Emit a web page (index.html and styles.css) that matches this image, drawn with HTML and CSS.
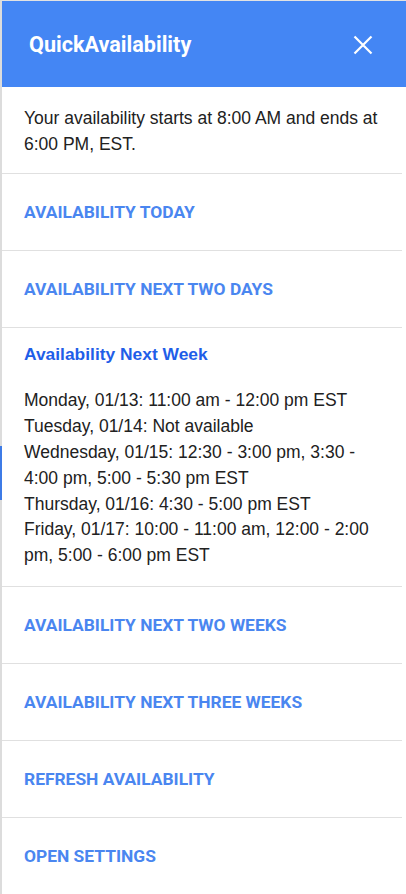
FILE: index.html
```html
<!DOCTYPE html>
<html>
<head>
<meta charset="utf-8">
<link rel="stylesheet" href="styles.css">
</head>
<body>
<div class="panel">
  <header class="header">
    <div class="title">QuickAvailability</div>
    <svg class="close" width="20" height="20" viewBox="0 0 20 20" aria-label="Close">
      <path d="M1.5 1.5 L18.5 18.5 M18.5 1.5 L1.5 18.5" stroke="#fff" stroke-width="2.2" fill="none"/>
    </svg>
  </header>
  <div class="content">
    <div class="intro">Your availability starts at 8:00 AM and ends at 6:00 PM, EST.</div>
    <div class="row"><span class="btn">AVAILABILITY TODAY</span></div>
    <div class="row"><span class="btn">AVAILABILITY NEXT TWO DAYS</span></div>
    <div class="week">
      <div class="week-title">Availability Next Week</div>
      <div class="week-list">
        <div>Monday, 01/13: 11:00 am - 12:00 pm EST</div>
        <div>Tuesday, 01/14: Not available</div>
        <div>Wednesday, 01/15: 12:30 - 3:00 pm, 3:30 - 4:00 pm, 5:00 - 5:30 pm EST</div>
        <div>Thursday, 01/16: 4:30 - 5:00 pm EST</div>
        <div>Friday, 01/17: 10:00 - 11:00 am, 12:00 - 2:00 pm, 5:00 - 6:00 pm EST</div>
      </div>
    </div>
    <div class="row"><span class="btn">AVAILABILITY NEXT TWO WEEKS</span></div>
    <div class="row"><span class="btn">AVAILABILITY NEXT THREE WEEKS</span></div>
    <div class="row"><span class="btn">REFRESH AVAILABILITY</span></div>
    <div class="row"><span class="btn">OPEN SETTINGS</span></div>
  </div>
  <div class="scroll-mark"></div>
</div>
</body>
</html>
```

FILE: styles.css
```css
html, body {
  margin: 0;
  padding: 0;
  background: #fff;
}
body {
  width: 406px;
  height: 894px;
  overflow: hidden;
}
.panel {
  position: relative;
  border-top: 1px solid #e2e2e2;
  border-left: 2px solid #dcdcdc;
  min-height: 893px;
  box-sizing: border-box;
  font-family: "Liberation Sans", Arial, sans-serif;
  color: #212121;
}
.header {
  height: 86px;
  background: #4486f4;
  display: flex;
  align-items: center;
  justify-content: space-between;
  padding: 0 33px 0 27px;
}
.title {
  font-family: Roboto, "Liberation Sans", sans-serif;
  font-weight: 700;
  font-size: 21.6px;
  color: #fff;
}
.close {
  display: block;
  margin-top: 1px;
}
.content {
  margin-right: 4px;
}
.intro {
  font-size: 17.5px;
  line-height: 25.8px;
  padding: 19px 22px 15px;
  border-bottom: 1px solid #e0e0e0;
}
.row {
  height: 76px;
  display: flex;
  align-items: center;
  padding: 0 22px;
  border-bottom: 1px solid #e0e0e0;
}
.btn {
  font-family: Roboto, "Liberation Sans", sans-serif;
  font-weight: 700;
  font-size: 17.4px;
  color: #4a86f0;
  margin-top: 1px;
}
.week {
  padding: 14px 22px 17px;
  border-bottom: 1px solid #e0e0e0;
}
.week-title {
  font-weight: 700;
  font-size: 17.4px;
  line-height: 25.8px;
  color: #1f5ee8;
}
.week-list {
  margin-top: 21px;
  font-size: 17.5px;
  line-height: 25.8px;
}
.scroll-mark {
  position: absolute;
  left: -2px;
  top: 445px;
  width: 2px;
  height: 54px;
  background: #3d7be6;
}
```
